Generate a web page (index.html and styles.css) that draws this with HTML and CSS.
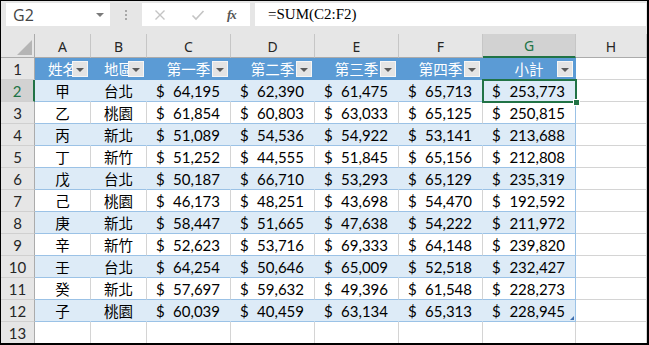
FILE: index.html
```html
<!DOCTYPE html>
<html>
<head>
<meta charset="utf-8">
<link rel="stylesheet" href="styles.css">
</head>
<body>
<div class="frame">
  <div class="fbar">
    <div class="namebox"><span class="nbtext">G2</span><span class="nbarrow"></span></div>
    <div class="grip"><i></i><i></i><i></i></div>
    <div class="btns">
      <svg class="ico" width="12" height="12" viewBox="0 0 12 12"><path d="M1.5 1.5 L10.5 10.5 M10.5 1.5 L1.5 10.5" stroke="#c4c4c4" stroke-width="1.4" fill="none"/></svg>
      <svg class="ico" width="14" height="12" viewBox="0 0 14 12"><path d="M1.5 6.5 L5 10 L12.5 2" stroke="#c4c4c4" stroke-width="1.6" fill="none"/></svg>
      <span class="fx">fx</span>
    </div>
    <div class="formula">=SUM(C2:F2)</div>
  </div>
  <div class="grid">
    <div class="cell corner"><svg width="17" height="17" viewBox="0 0 17 17"><polygon points="16,1 16,16 1,16" fill="#b5b5b5"/></svg></div>
    <div class="cell ch">A</div>
    <div class="cell ch">B</div>
    <div class="cell ch">C</div>
    <div class="cell ch">D</div>
    <div class="cell ch">E</div>
    <div class="cell ch">F</div>
    <div class="cell ch sel">G</div>
    <div class="cell ch">H</div>

    <div class="cell rh">1</div>
    <div class="cell hd">姓名<span class="filt"></span></div>
    <div class="cell hd">地區<span class="filt"></span></div>
    <div class="cell hd">第一季<span class="filt"></span></div>
    <div class="cell hd">第二季<span class="filt"></span></div>
    <div class="cell hd">第三季<span class="filt"></span></div>
    <div class="cell hd">第四季<span class="filt"></span></div>
    <div class="cell hd">小計<span class="filt"></span></div>
    <div class="cell"></div>

    <div class="cell rh sel">2</div>
    <div class="cell t b nm">甲</div>
    <div class="cell t b nm">台北</div>
    <div class="cell t b acc"><span>$</span><span>64,195</span></div>
    <div class="cell t b acc"><span>$</span><span>62,390</span></div>
    <div class="cell t b acc"><span>$</span><span>61,475</span></div>
    <div class="cell t b acc"><span>$</span><span>65,713</span></div>
    <div class="cell t b g acc active"><span>$</span><span>253,773</span><span class="selbox"><span class="handle"></span></span></div>
    <div class="cell"></div>

    <div class="cell rh">3</div>
    <div class="cell t nm">乙</div>
    <div class="cell t nm">桃園</div>
    <div class="cell t acc"><span>$</span><span>61,854</span></div>
    <div class="cell t acc"><span>$</span><span>60,803</span></div>
    <div class="cell t acc"><span>$</span><span>63,033</span></div>
    <div class="cell t acc"><span>$</span><span>65,125</span></div>
    <div class="cell t g acc"><span>$</span><span>250,815</span></div>
    <div class="cell"></div>

    <div class="cell rh">4</div>
    <div class="cell t b nm">丙</div>
    <div class="cell t b nm">新北</div>
    <div class="cell t b acc"><span>$</span><span>51,089</span></div>
    <div class="cell t b acc"><span>$</span><span>54,536</span></div>
    <div class="cell t b acc"><span>$</span><span>54,922</span></div>
    <div class="cell t b acc"><span>$</span><span>53,141</span></div>
    <div class="cell t b g acc"><span>$</span><span>213,688</span></div>
    <div class="cell"></div>

    <div class="cell rh">5</div>
    <div class="cell t nm">丁</div>
    <div class="cell t nm">新竹</div>
    <div class="cell t acc"><span>$</span><span>51,252</span></div>
    <div class="cell t acc"><span>$</span><span>44,555</span></div>
    <div class="cell t acc"><span>$</span><span>51,845</span></div>
    <div class="cell t acc"><span>$</span><span>65,156</span></div>
    <div class="cell t g acc"><span>$</span><span>212,808</span></div>
    <div class="cell"></div>

    <div class="cell rh">6</div>
    <div class="cell t b nm">戊</div>
    <div class="cell t b nm">台北</div>
    <div class="cell t b acc"><span>$</span><span>50,187</span></div>
    <div class="cell t b acc"><span>$</span><span>66,710</span></div>
    <div class="cell t b acc"><span>$</span><span>53,293</span></div>
    <div class="cell t b acc"><span>$</span><span>65,129</span></div>
    <div class="cell t b g acc"><span>$</span><span>235,319</span></div>
    <div class="cell"></div>

    <div class="cell rh">7</div>
    <div class="cell t nm">己</div>
    <div class="cell t nm">桃園</div>
    <div class="cell t acc"><span>$</span><span>46,173</span></div>
    <div class="cell t acc"><span>$</span><span>48,251</span></div>
    <div class="cell t acc"><span>$</span><span>43,698</span></div>
    <div class="cell t acc"><span>$</span><span>54,470</span></div>
    <div class="cell t g acc"><span>$</span><span>192,592</span></div>
    <div class="cell"></div>

    <div class="cell rh">8</div>
    <div class="cell t b nm">庚</div>
    <div class="cell t b nm">新北</div>
    <div class="cell t b acc"><span>$</span><span>58,447</span></div>
    <div class="cell t b acc"><span>$</span><span>51,665</span></div>
    <div class="cell t b acc"><span>$</span><span>47,638</span></div>
    <div class="cell t b acc"><span>$</span><span>54,222</span></div>
    <div class="cell t b g acc"><span>$</span><span>211,972</span></div>
    <div class="cell"></div>

    <div class="cell rh">9</div>
    <div class="cell t nm">辛</div>
    <div class="cell t nm">新竹</div>
    <div class="cell t acc"><span>$</span><span>52,623</span></div>
    <div class="cell t acc"><span>$</span><span>53,716</span></div>
    <div class="cell t acc"><span>$</span><span>69,333</span></div>
    <div class="cell t acc"><span>$</span><span>64,148</span></div>
    <div class="cell t g acc"><span>$</span><span>239,820</span></div>
    <div class="cell"></div>

    <div class="cell rh">10</div>
    <div class="cell t b nm">壬</div>
    <div class="cell t b nm">台北</div>
    <div class="cell t b acc"><span>$</span><span>64,254</span></div>
    <div class="cell t b acc"><span>$</span><span>50,646</span></div>
    <div class="cell t b acc"><span>$</span><span>65,009</span></div>
    <div class="cell t b acc"><span>$</span><span>52,518</span></div>
    <div class="cell t b g acc"><span>$</span><span>232,427</span></div>
    <div class="cell"></div>

    <div class="cell rh">11</div>
    <div class="cell t nm">癸</div>
    <div class="cell t nm">新北</div>
    <div class="cell t acc"><span>$</span><span>57,697</span></div>
    <div class="cell t acc"><span>$</span><span>59,632</span></div>
    <div class="cell t acc"><span>$</span><span>49,396</span></div>
    <div class="cell t acc"><span>$</span><span>61,548</span></div>
    <div class="cell t g acc"><span>$</span><span>228,273</span></div>
    <div class="cell"></div>

    <div class="cell rh">12</div>
    <div class="cell t b nm">子</div>
    <div class="cell t b nm">桃園</div>
    <div class="cell t b acc"><span>$</span><span>60,039</span></div>
    <div class="cell t b acc"><span>$</span><span>40,459</span></div>
    <div class="cell t b acc"><span>$</span><span>63,134</span></div>
    <div class="cell t b acc"><span>$</span><span>65,313</span></div>
    <div class="cell t b g acc rz"><span>$</span><span>228,945</span></div>
    <div class="cell"></div>

    <div class="cell rh">13</div>
    <div class="cell"></div>
    <div class="cell"></div>
    <div class="cell"></div>
    <div class="cell"></div>
    <div class="cell"></div>
    <div class="cell"></div>
    <div class="cell"></div>
    <div class="cell"></div>
  </div>
</div>
</body>
</html>
```
FILE: styles.css
```css
html, body { margin: 0; padding: 0; background: #fff; }
.frame {
  width: 649px; height: 345px; box-sizing: border-box;
  border-top: 1px solid #000; border-left: 1px solid #000;
  border-right: 2px solid #000; border-bottom: 2px solid #000;
  background: #e6e6e6; overflow: hidden;
}
.fbar {
  height: 33px; box-sizing: border-box;
  display: flex; align-items: flex-start;
  padding: 2px 1px 0 5px;
}
.namebox {
  width: 104px; height: 23px; background: #fff;
  display: flex; align-items: center; justify-content: space-between;
  box-sizing: border-box; padding: 0 6px 0 7px;
}
.nbtext { font: 16px "Open Sans", sans-serif; color: #444; }
.nbarrow {
  width: 0; height: 0;
  border-left: 4px solid transparent; border-right: 4px solid transparent;
  border-top: 4px solid #7a7a7a;
}
.grip {
  width: 32px; height: 23px;
  display: flex; flex-direction: column; align-items: center; justify-content: center; gap: 2px;
}
.grip i { display: block; width: 2px; height: 2px; background: #a8a8a8; }
.btns {
  width: 108px; height: 23px; background: #fff;
  display: flex; align-items: center; box-sizing: border-box;
  padding: 0 0 0 12px; margin-right: 5px;
}
.btns .ico { margin-right: 25px; }
.btns .ico + .ico { margin-right: 22px; }
.fx {
  font: italic bold 13px "Liberation Serif", serif; color: #555;
  letter-spacing: -1px;
}
.formula {
  flex: 1; height: 23px; background: #fff;
  display: flex; align-items: center; box-sizing: border-box;
  padding-left: 13px;
  font: 15px "Liberation Serif", serif; color: #000;
}
.grid {
  display: grid;
  grid-template-columns: 34px 56px 56px 84px 84px 84px 84px 93px 1fr;
  grid-template-rows: 24px repeat(13, 22px);
}
.cell {
  box-sizing: border-box; min-width: 0;
  border-right: 1px solid #d4d4d4; border-bottom: 1px solid #d4d4d4;
  background: #fff;
  display: flex; align-items: center;
  font: 15px "Lato", "Noto Sans CJK TC", sans-serif; color: #000;
  white-space: nowrap; overflow: hidden;
}
.corner {
  background: #e6e6e6; border-right-color: #ababab; border-bottom-color: #ababab;
  align-items: flex-end; justify-content: flex-end; padding: 0 1px 1px 0;
}
.ch {
  background: #e6e6e6; border-right-color: #c6c6c6; border-bottom-color: #ababab;
  justify-content: center; font: 14px "Noto Sans", sans-serif; color: #262626;
  padding-top: 1px;
}
.ch.sel { background: #d2d2d2; color: #217346; border-bottom: 2px solid #217346; }
.rh {
  background: #e6e6e6; border-right-color: #ababab; border-bottom-color: #d0d0d0;
  justify-content: center; font: 15px "Lato", sans-serif; color: #262626;
}
.rh.sel { background: #d2d2d2; color: #217346; border-right: 2px solid #217346; }
.hd {
  background: #5b9bd5; border-right-color: #5b9bd5; border-bottom-color: #5b9bd5;
  color: #fff; justify-content: center; position: relative;
  font: 14.5px "Noto Sans CJK TC", sans-serif;
}
.filt {
  position: absolute; right: 2px; top: 3px;
  width: 16px; height: 16px; box-sizing: border-box;
  background: #e4e4e4; border: 1px solid #f6f6f6;
  display: flex; align-items: center; justify-content: center;
}
.filt::after {
  content: ""; width: 0; height: 0;
  border-left: 4px solid transparent; border-right: 4px solid transparent;
  border-top: 4px solid #5a5a5a; margin-top: 1px;
}
.t { border-bottom-color: #9bc2e6; }
.b { background: #ddebf7; border-right-color: #ddebf7; }
.g { border-right-color: #9bc2e6; }
.nm { justify-content: center; font: 14.5px "Noto Sans CJK TC", sans-serif; }
.acc { justify-content: space-between; padding: 1px 10px 0 9px; }
.active { position: relative; overflow: visible; }
.selbox {
  position: absolute; left: -1px; top: -1px; width: 95px; height: 24px;
  box-sizing: border-box; border: 2px solid #217346; z-index: 2;
}
.handle {
  position: absolute; right: -5px; bottom: -5px; width: 7px; height: 7px;
  box-sizing: border-box; background: #217346; border: 1px solid #fff;
}
.rz { position: relative; }
.rz::after {
  content: ""; position: absolute; right: 1px; bottom: 1px;
  width: 0; height: 0;
  border-left: 4px solid transparent; border-bottom: 4px solid #3f6fb0;
}
```
